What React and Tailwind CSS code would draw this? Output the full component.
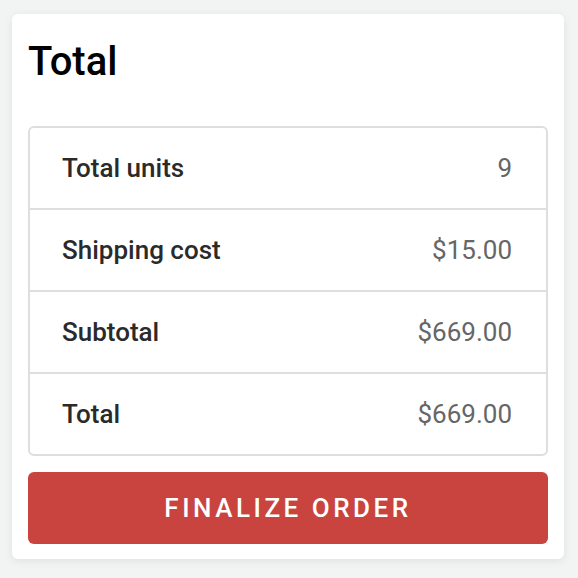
export default function App() {
  const rows = [
    ["Total units", "9"],
    ["Shipping cost", "$15.00"],
    ["Subtotal", "$669.00"],
    ["Total", "$669.00"],
  ];
  return (
    <div className="w-[578px] h-[578px] bg-[#f2f3f3] pt-[14px] pl-[12px]" style={{ fontFamily: "Roboto, sans-serif" }}>
      <div className="w-[552px] bg-white rounded-[6px] shadow-[0_2px_8px_rgba(0,0,0,0.08)] px-4 pt-4 pb-[15px]">
        <div className="h-[96px] flex items-start">
          <h1 className="text-[40px] leading-[64px] font-medium text-black">Total</h1>
        </div>
        <div className="border-2 border-[#dedede] rounded-[6px]">
          {rows.map(([l, v], i) => (
            <div
              key={l}
              className={`${i > 0 ? "h-[82px] border-t-2 border-[#dedede]" : "h-[80px]"} flex items-center justify-between pl-[32px] pr-[34px]`}
            >
              <span className="text-[26px] font-medium text-[#2a2a2a]">{l}</span>
              <span className="text-[26px] font-normal text-[#666]">{v}</span>
            </div>
          ))}
        </div>
        <button className="mt-[16px] w-full h-[72px] rounded-[6px] bg-[#c9443f] text-white text-[26px] tracking-[0.135em] font-medium">
          FINALIZE ORDER
        </button>
      </div>
    </div>
  );
}
